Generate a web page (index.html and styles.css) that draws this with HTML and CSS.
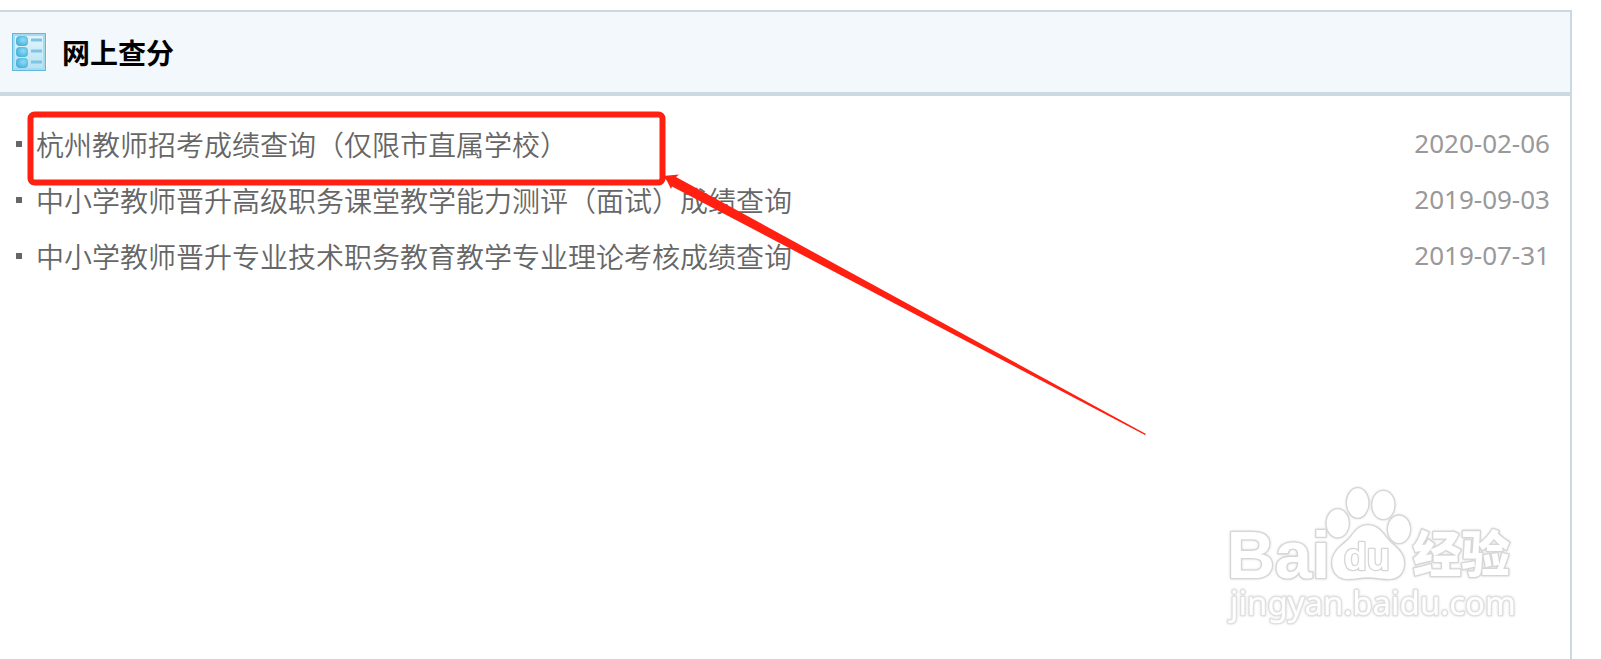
FILE: index.html
```html
<!DOCTYPE html>
<html lang="zh-CN">

<head>
    <meta charset="UTF-8">
    <title>网上查分</title>
    <link rel="stylesheet" href="styles.css">
</head>

<body>
    <div class="panel">
        <div class="panel-head">
            <svg class="head-icon" viewBox="0 0 35 39" aria-hidden="true">
                <defs>
                    <linearGradient id="paper" x1="0" y1="0" x2="0" y2="1">
                        <stop offset="0" stop-color="#e6f6fb" />
                        <stop offset="1" stop-color="#b4e1f3" />
                    </linearGradient>
                    <radialGradient id="dot" cx="0.6" cy="0.4" r="0.7">
                        <stop offset="0" stop-color="#8fdcf5" />
                        <stop offset="1" stop-color="#3fabd8" />
                    </radialGradient>
                </defs>
                <rect x="0" y="0" width="35" height="39" fill="#fff" />
                <rect x="0.5" y="0.5" width="33" height="37" fill="url(#paper)" stroke="#5fb9df" />
                <rect x="2" y="2" width="30" height="34" fill="none" stroke="#a5dbef" stroke-width="2" />
                <rect x="4" y="3" width="12" height="10" rx="4" fill="url(#dot)" />
                <rect x="4" y="14" width="12" height="10" rx="4" fill="url(#dot)" />
                <rect x="4" y="25" width="12" height="10" rx="4" fill="url(#dot)" />
                <path d="M19 7h11M19 18h11M19 29h11" stroke="#7fc4e2" stroke-width="3" />
            </svg>
            <h2>网上查分</h2>
        </div>

        <ul class="news-list">
            <li>
                <a href="#">杭州教师招考成绩查询（仅限市直属学校）</a>
                <span class="date">2020-02-06</span>
            </li>
            <li>
                <a href="#">中小学教师晋升高级职务课堂教学能力测评（面试）成绩查询</a>
                <span class="date">2019-09-03</span>
            </li>
            <li>
                <a href="#">中小学教师晋升专业技术职务教育教学专业理论考核成绩查询</a>
                <span class="date">2019-07-31</span>
            </li>
        </ul>

        <!-- 红框和箭头 -->
        <svg class="mark" viewBox="20 100 1130 340" aria-hidden="true">
            <rect x="30.5" y="114.5" width="632" height="68" rx="4" fill="none" stroke="#ff2012" stroke-width="6" />
            <path d="M663 176L679 174.5L676 177L1146 434L1145 435L672 186.5L671 189L667 181Z" fill="#ff2012" />
        </svg>

        <!-- 水印 -->
        <svg class="watermark" viewBox="45 45 879 420" role="img" aria-label="Baidu经验">
            <g class="outline">
                <text class="wm-bai" x="50" y="323">Bai</text>
                <ellipse cx="383" cy="160" rx="33" ry="42" />
                <ellipse cx="443" cy="99" rx="32" ry="44" />
                <ellipse cx="520" cy="105" rx="33" ry="42" />
                <ellipse cx="567" cy="178" rx="33" ry="41" />
                <path d="M474 166C445 166 434 187 420 204C403 224 367 240 367 279C367 308 386 327 413 327C437 327 452 322 474 322C496 322 512 327 537 327C565 327 582 309 582 280C582 243 550 229 532 207C516 188 504 166 474 166Z" />
                <text class="wm-du" x="401" y="300">du</text>
                <text class="wm-cn" x="608" y="306">经验</text>
                <text class="wm-url" x="60" y="435">jingyan.baidu.com</text>
            </g>
        </svg>
    </div>
</body>

</html>
```

FILE: styles.css
```css
* {
    margin: 0;
    padding: 0;
    box-sizing: border-box;
}

body {
    padding: 10px 29px 0 0;
    background: #fff;
    font-family: "Noto Sans", "Noto Sans CJK SC", sans-serif;
}

.panel {
    position: relative;
    min-height: calc(100vh - 10px);
    border-top: 2px solid #cbd9e3;
    border-right: 2px solid #cbd9e3;
}

.panel-head {
    display: flex;
    align-items: center;
    gap: 15px;
    height: 84px;
    padding-left: 12px;
    background: #f2f8fb;
    border-bottom: 4px solid #cbd9e3;
}

.head-icon {
    width: 35px;
    height: 39px;
}

.panel-head h2 {
    font-family: "Noto Sans CJK SC", sans-serif;
    font-size: 28px;
    font-weight: 700;
    line-height: 40px;
    color: #000;
}

.news-list {
    padding: 20px 20px 0 16px;
    list-style: none;
}

.news-list li {
    display: flex;
    align-items: center;
    height: 56px;
}

.news-list li::before {
    content: "";
    width: 6px;
    height: 6px;
    margin-right: 14px;
    background: #666;
}

.news-list a {
    flex: 1;
    font-family: "Noto Sans CJK SC", sans-serif;
    font-size: 28px;
    font-weight: 350;
    line-height: 40px;
    color: #666;
    text-decoration: none;
}

.news-list a:hover {
    text-decoration: underline;
}

.date {
    padding-bottom: 2px;
    font-size: 26px;
    line-height: 36px;
    color: #999;
}

.mark {
    position: absolute;
    top: 88px;
    left: 20px;
    width: 1130px;
    height: 340px;
    pointer-events: none;
}

.watermark {
    position: absolute;
    right: 52px;
    bottom: 34px;
    width: 293px;
    height: 140px;
    overflow: visible;
}

.outline {
    fill: #fff;
    stroke: #d6d6d6;
    stroke-width: 8px;
    stroke-linejoin: round;
    paint-order: stroke;
    filter: drop-shadow(0 0 3px #ddd);
}

.wm-bai {
    font: bold 200px "Liberation Sans", sans-serif;
}

.wm-du {
    font: bold 114px "Liberation Sans", sans-serif;
}

.wm-cn {
    font: 900 146px "Noto Sans CJK SC", sans-serif;
}

.wm-url {
    font: 99px "Noto Sans", sans-serif;
    stroke: #e0e0e0;
}
```
